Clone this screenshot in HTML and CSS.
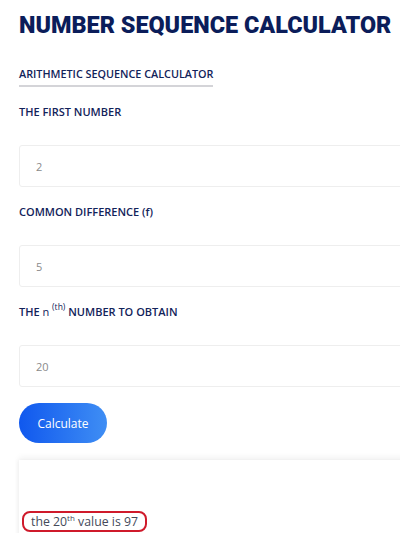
FILE: index.html
```html
<!DOCTYPE html>
<html lang="en">
<head>
    <meta charset="UTF-8">
    <title>Number Sequence Calculator</title>
    <link rel="stylesheet" href="styles.css">
</head>
<body>
    <div class="container">
        <h1 class="title">NUMBER SEQUENCE CALCULATOR</h1>
        <div class="tabs"><span class="tab active">ARITHMETIC SEQUENCE CALCULATOR</span></div>

        <div class="field">
            <label for="first">THE FIRST NUMBER</label>
            <input id="first" class="input" type="text" value="2">
        </div>
        <div class="field">
            <label for="diff">COMMON DIFFERENCE (f)</label>
            <input id="diff" class="input" type="text" value="5">
        </div>
        <div class="field">
            <label for="nth">THE <span class="lower">n</span> <sup>(th)</sup> NUMBER TO OBTAIN</label>
            <input id="nth" class="input" type="text" value="20">
        </div>

        <button class="btn-calc" onclick="calculate()">Calculate</button>

        <div class="result-box">
            <span id="result" class="result">the 20<sup>th</sup> value is 97</span>
        </div>
    </div>

    <script>
        function calculate() {
            const a = parseFloat(document.getElementById('first').value);
            const d = parseFloat(document.getElementById('diff').value);
            const n = parseInt(document.getElementById('nth').value, 10);
            const value = a + (n - 1) * d;
            document.getElementById('result').innerHTML = `the ${n}<sup>th</sup> value is ${value}`;
        }
    </script>
</body>
</html>
```

FILE: styles.css
```css
html, body { margin: 0; padding: 0; background: #fff; overflow: hidden; height: 100%; }
body { font-family: "Open Sans", sans-serif; color: #0c1f4f; }
.container { width: 420px; padding: 10px 0 0 19px; box-sizing: border-box; }
.title { font-family: Roboto, sans-serif; font-weight: 900; font-size: 23.4px; line-height: 30px; margin: 0; color: #0b1d5a; white-space: nowrap; }
.tabs { margin-top: 21px; margin-bottom: 6px; }
.tab { display: inline-block; font-size: 10.8px; line-height: 14px; font-weight: 600; padding-bottom: 4px; border-bottom: 2px solid #d4d4d8; color: #12235a; }
.field { margin-top: 18px; }
.field label { display: block; font-size: 11px; font-weight: 600; color: #12235a; line-height: 14px; margin-bottom: 26px; white-space: nowrap; }
.field label sup { font-size: 8.5px; font-weight: 500; line-height: 0; vertical-align: baseline; position: relative; top: -0.7em; }
.field label .lower { font-weight: 500; }
.input { display: block; width: 100%; height: 42px; box-sizing: border-box; border: 1.5px solid #eeeeee; border-radius: 3px; padding: 0 16px; font-family: inherit; font-size: 11px; color: #8a8a8a; background: #fff; outline: none; }
.btn-calc { display: block; margin-top: 16px; width: 88px; height: 40px; border: none; border-radius: 20px; background: linear-gradient(90deg, #1058ee, #3f8ef4); color: #fff; font-family: inherit; font-size: 12px; font-weight: 500; cursor: pointer; }
.result-box { margin-top: 17px; height: 100px; background: #fff; box-shadow: 0 -3px 6px rgba(0,0,0,0.05), -2px 0 4px rgba(0,0,0,0.03); padding: 49px 0 0 3px; box-sizing: border-box; }
.result { display: inline-block; border: 2.5px solid #cf1a2b; border-radius: 8px; padding: 0 7px; line-height: 17px; font-size: 12.3px; color: #444a5a; }
.result sup { font-size: 8px; line-height: 0; vertical-align: baseline; position: relative; top: -0.6em; }
```
